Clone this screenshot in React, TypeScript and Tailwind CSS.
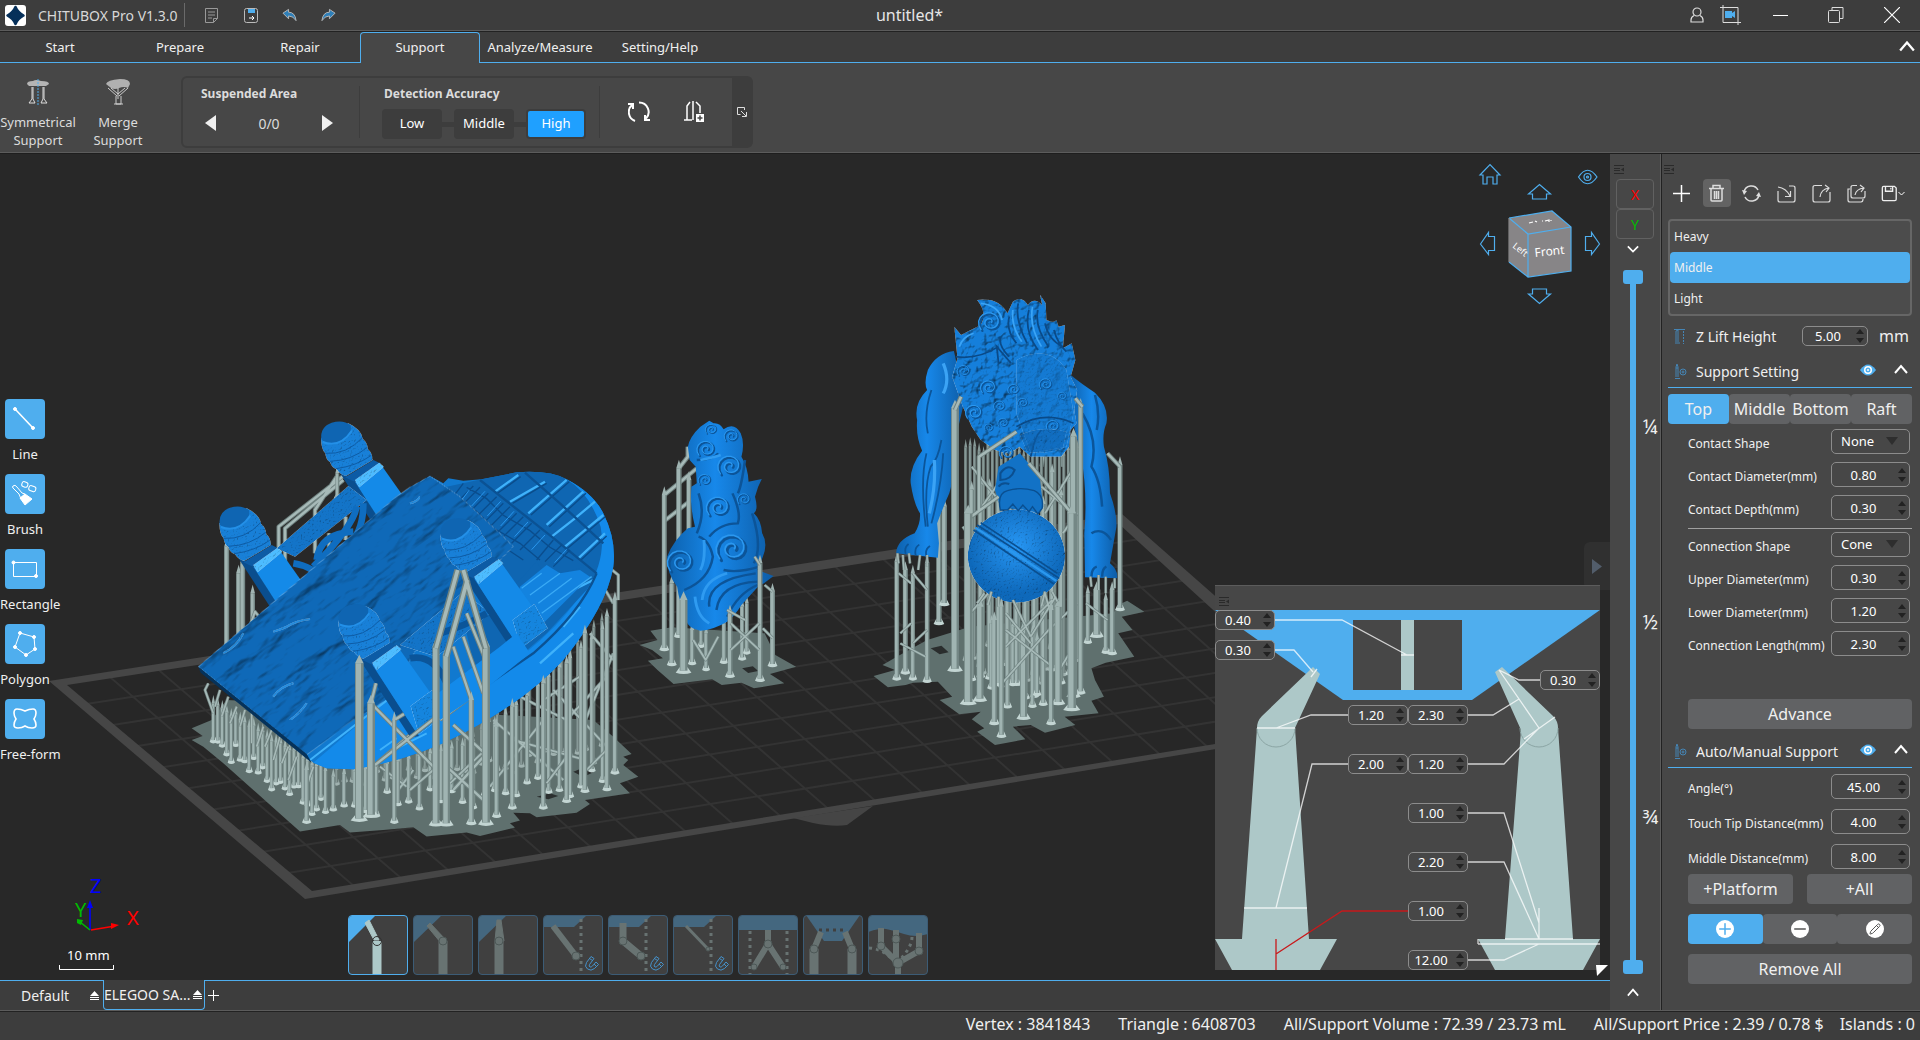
import type { ReactNode } from "react";
import { Minus, Pencil, Plus } from "lucide-react";

/* ---------- small shared pieces ---------- */

function Chevron({ down = false, size = 14 }: { down?: boolean; size?: number }) {
  return (
    <svg width={size} height={size} viewBox="0 0 14 14" fill="none" stroke="#fff" strokeWidth="2">
      <path d={down ? "M1 4l6 6 6-6" : "M1 10l6-7 6 7"} />
    </svg>
  );
}

function DockHandle() {
  return (
    <svg width="10" height="9" viewBox="0 0 10 9" stroke="#2a2a2a" aria-hidden="true">
      <path d="M0 .5h10M0 3.500h6M0 5.500h6M0 8.500h10" />
      <path d="M7 4.500l3-2v4z" fill="#2a2a2a" stroke="none" />
    </svg>
  );
}

function SpinArrows() {
  return (
    <svg className="pointer-events-none absolute right-1 top-1/2 -translate-y-1/2" width="8" height="14" viewBox="0 0 8 14" fill="#222">
      <path d="M4 0l4 5H0zM4 14l4-5H0z" />
    </svg>
  );
}

// className has to bring a position of its own (relative or absolute)
function NumberBox({ id, value, className, label }: { id?: string; value: string; className: string; label?: string }) {
  return (
    <div className={className}>
      <input
        id={id}
        aria-label={label}
        defaultValue={value}
        className="block h-full w-full rounded-[5px] border border-[#8c8c8c] bg-[#474747] pr-3.5 text-center text-[13px] text-white outline-none"
      />
      <SpinArrows />
    </div>
  );
}

function Row({ id, label, children }: { id: string; label: string; children: ReactNode }) {
  return (
    <div className="flex h-[25px] items-center justify-between pr-0.5">
      <label htmlFor={id} className="whitespace-nowrap pt-1 text-[12px]">{label}</label>
      {children}
    </div>
  );
}

function NumberRow({ id, label, value }: { id: string; label: string; value: string }) {
  return (
    <Row id={id} label={label}>
      <NumberBox id={id} value={value} className="relative h-[25px] w-[79px] shrink-0" />
    </Row>
  );
}

function SelectRow({ id, label, value }: { id: string; label: string; value: string }) {
  return (
    <Row id={id} label={label}>
      <div className="relative h-[25px] w-[79px] shrink-0">
        <select id={id} className="block h-full w-full appearance-none rounded-[5px] border border-[#8c8c8c] bg-[#474747] pl-[9px] text-[13px] text-white outline-none">
          <option>{value}</option>
        </select>
        <svg className="pointer-events-none absolute right-3 top-2" width="12" height="8" viewBox="0 0 12 8" fill="#2e2e2e">
          <path d="M0 0h12L6 8z" />
        </svg>
      </div>
    </Row>
  );
}

function EyeIcon() {
  return (
    <svg width="16" height="12" viewBox="0 0 16 12">
      <path d="M0 6Q8-5 16 6Q8 17 0 6z" fill="#4faeee" />
      <circle cx="8" cy="6" r="4" fill="#fff" />
      <circle cx="8" cy="6" r="2.500" fill="#4faeee" />
      <circle cx="8" cy="6" r="1" fill="#fff" />
    </svg>
  );
}

function SupportIcon() {
  return (
    <svg width="13" height="16" viewBox="0 0 13 16" fill="none" stroke="#4585b5">
      <path d="M1 14.500h5M2 13V3l1-3 1 3v10M2 4h2" />
      <circle cx="9" cy="8" r="3" />
      <circle cx="9" cy="8" r="1" />
    </svg>
  );
}

/* ---------- title bar, tabs and ribbon ---------- */

function TitleBar() {
  return (
    <header className="flex h-[31px] shrink-0 items-center border-b border-[#5c5c5c] bg-[#3d3d3d] pl-[5px] text-[#d8d8d8]">
      <div className="flex flex-1 items-center">
        <svg width="21" height="21" viewBox="0 0 21 21">
          <rect width="21" height="21" rx="3" fill="#fff" />
          <path d="M10.500 2q2 5 8 8.500-6 3.500-8 8.500-2-5-8-8.500 6-3.500 8-8.500z" fill="#06305a" stroke="#06305a" strokeWidth="2.500" strokeLinejoin="round" />
        </svg>
        <span className="w-[158px] pl-3 text-[14px]">CHITUBOX Pro V1.3.0</span>
        <span className="h-6 w-px bg-[#6a6a6a]" />
        <div className="flex items-center gap-6 pl-5">
          <button aria-label="Open">
            <svg width="13" height="15" viewBox="0 0 13 15" fill="none" stroke="#999"><path d="M.5.5h12v10l-4 4h-8zM3 4h7M3 7h7M3 10h4M12.500 10.500h-4v4" /></svg>
          </button>
          <button aria-label="Save" className="pl-0.5">
            <svg width="14" height="15" viewBox="0 0 14 15" fill="none" stroke="#bbb"><rect x=".5" y=".5" width="13" height="14" rx="2" /><path d="M4 1h7v4H4z" fill="#4faeee" stroke="none" /><path d="M5 10h5M8 8l2 2-2 2" stroke="#fff" /></svg>
          </button>
          <button aria-label="Undo">
            <svg width="15" height="14" viewBox="0 0 16 14" fill="#2f7fb8" stroke="#bbb"><path d="M1 5l6-4v3q7 0 8 9-3-5-8-5v3z" /></svg>
          </button>
          <button aria-label="Redo">
            <svg width="15" height="14" viewBox="0 0 16 14" fill="#2f7fb8" stroke="#bbb"><path d="M15 5L9 1v3Q2 4 1 13q3-5 8-5v3z" /></svg>
          </button>
        </div>
      </div>
      <h1 className="mr-[86px] text-[16px] leading-6 text-[#e6e6e6]">untitled*</h1>
      <div className="flex flex-1 items-center justify-end pr-5 text-white">
        <button aria-label="Account" className="mr-4">
          <svg width="14" height="16" viewBox="0 0 14 16" fill="none" stroke="#ddd" strokeWidth="1.200"><circle cx="7" cy="5" r="4" /><path d="M4 8.500Q1 10 1 13v2h12v-2q0-3-3-4.500" /></svg>
        </button>
        <button aria-label="Record" className="mr-8">
          <svg width="21" height="20" viewBox="0 0 21 20" fill="none" stroke="#ddd"><path d="M3 0v17.500h18M0 2.500h18V20" /><path d="M5 6h7v2l3-2v7l-3-2v2H5z" fill="#4faeee" stroke="none" /></svg>
        </button>
        <button aria-label="Minimize" className="mr-10">
          <svg width="15" height="15" viewBox="0 0 15 15" stroke="#fff"><path d="M0 7.500h15" /></svg>
        </button>
        <button aria-label="Restore" className="mr-10">
          <svg width="16" height="16" viewBox="0 0 16 16" fill="none" stroke="#ddd"><rect x=".5" y="3.500" width="11" height="12" rx="1" /><path d="M4 3.500v-3h11v11h-3" /></svg>
        </button>
        <button aria-label="Close">
          <svg width="16" height="16" viewBox="0 0 16 16" stroke="#fff" strokeWidth="1.200"><path d="M0 0l16 16M16 0L0 16" /></svg>
        </button>
      </div>
    </header>
  );
}

const tabs = ["Start", "Prepare", "Repair", "Support", "Analyze/Measure", "Setting/Help"];

function TabBar() {
  return (
    <nav className="flex h-8 shrink-0 border-t border-[#222] bg-[#3d3d3d] text-[13px]">
      {tabs.map((t) => (
        <button
          key={t}
          className={
            t === "Support"
              ? "w-[120px] shrink-0 rounded-t-[4px] border-x border-t border-[#4faeee] bg-[#474747]"
              : "w-[120px] shrink-0 whitespace-nowrap border-b border-[#4faeee] pt-px"
          }
        >
          {t}
        </button>
      ))}
      <div className="flex flex-1 items-center justify-end border-b border-[#4faeee] pr-[5px]">
        <button aria-label="Collapse ribbon"><Chevron size={16} /></button>
      </div>
    </nav>
  );
}

function Ribbon() {
  return (
    <section className="flex h-[91px] shrink-0 border-b border-[#1e1e1e] bg-[#474747] text-[#dcdcdc] shadow-[inset_0_-1px_0_#5c5c5c]">
      <button className="mt-4 flex w-[76px] flex-col items-center text-[13px] leading-[18px]">
        <svg width="22" height="26" viewBox="0 0 22 26" fill="none" stroke="#ddd">
          <path d="M0 5Q0 2 6 2q3-2 8 0 8 0 8 3l-3 2H2z" fill="#b5b5b5" stroke="none" />
          <path d="M5 8v12l-3 4h6l-2-4V8M17 8v12l3 4h-6l2-4V8" />
          <path d="M11 0v26" stroke="#4faeee" strokeDasharray="2 1" />
        </svg>
        <span className="mt-2">Symmetrical<br />Support</span>
      </button>
      <button className="mt-4 flex w-[84px] flex-col items-center text-[13px] leading-[18px]">
        <svg width="24" height="26" viewBox="0 0 24 26" fill="none" stroke="#ccc">
          <path d="M0 5Q1 1 14 0q10 0 10 5l-2 4q-4-2-9 0-4 2-8 0z" fill="#b0b0b0" stroke="none" />
          <path d="M2 9l9 8M5 9l7 6M12 9v11M22 9l-9 8M19 9l-7 6M10 17v8h5v-8M8 25h9" />
        </svg>
        <span className="mt-2">Merge<br />Support</span>
      </button>

      <div className="ml-[21px] mt-[13px] flex h-[72px] rounded-[6px] border-2 border-[#3d3d3d]">
        <div className="my-2 w-[177px] border-r border-[#3d3d3d] pl-[18px]">
          <h2 className="text-[12px] font-bold leading-4">Suspended Area</h2>
          <div className="mt-2 flex h-[26px] w-[132px] items-center justify-between pl-1 text-[14px]">
            <button aria-label="Previous"><svg width="11" height="16" viewBox="0 0 11 16" fill="#f0f0f0"><path d="M11 0v16L0 8z" /></svg></button>
            <span>0/0</span>
            <button aria-label="Next"><svg width="11" height="16" viewBox="0 0 11 16" fill="#f0f0f0"><path d="M0 0v16l11-8z" /></svg></button>
          </div>
        </div>
        <div className="my-2 w-[240px] border-r border-[#3d3d3d] pl-[22px]">
          <h2 className="pl-0.5 text-[12px] font-bold leading-4">Detection Accuracy</h2>
          <div className="mt-[7px] flex items-center text-[13px] text-white">
            <button className="h-[30px] w-[60px] rounded-[4px] bg-[#3d3d3d]">Low</button>
            <span className="h-[5px] w-3 bg-[#3d3d3d]" />
            <button className="h-[30px] w-[60px] rounded-[4px] bg-[#3d3d3d]">Middle</button>
            <span className="h-[5px] w-3 bg-[#3d3d3d]" />
            <button className="h-[30px] w-[60px] rounded-[4px] border-2 border-[#3d3d3d] bg-[#1fa0ff]">High</button>
          </div>
        </div>
        <div className="flex w-[132px] items-center gap-[34px] pl-7">
          <button aria-label="Redetect">
            <svg width="22" height="22" viewBox="0 0 22 22" fill="none" stroke="#fff" strokeWidth="2"><path d="M7 20A9.500 9.500 0 0 1 4 4M0 3h5v5M11 1.500a9.500 9.500 0 0 1 7 16M22 19h-5v-5" /></svg>
          </button>
          <button aria-label="Add supports">
            <svg width="21" height="22" viewBox="0 0 21 22" fill="none" stroke="#fff" strokeWidth="1.500"><path d="M6 1L3 5v14M0 19h8M9 0v19M12 1l4 4v7M9 0v19" /><rect x="12" y="13" width="8" height="8" fill="#fff" stroke="none" /><path d="M16 14.500v5M13.500 17h5" stroke="#474747" /></svg>
          </button>
        </div>
        <button aria-label="Expand" className="flex w-[19px] items-center justify-center bg-[#3d3d3d]">
          <svg width="10" height="10" viewBox="0 0 10 10" fill="none" stroke="#ddd"><path d="M7.500 3V.5h-7v7h3M4 4l5 5M9.500 5v4.500H5" /></svg>
        </button>
      </div>
    </section>
  );
}

/* ---------- 3D scene ---------- */

const corner = { l: [60, 683], b: [308, 895], t: [1120, 518], r: [1350, 724] };

function mix(a: number[], b: number[], k: number) {
  return [a[0] + (b[0] - a[0]) * k, a[1] + (b[1] - a[1]) * k];
}

function BuildPlate() {
  const lines: string[] = [];
  for (let i = 1; i < 22; i++) {
    const a = mix(corner.l, corner.t, i / 22);
    const b = mix(corner.b, corner.r, i / 22);
    lines.push(`M${a[0]} ${a[1]}L${b[0]} ${b[1]}`);
  }
  for (let i = 1; i < 10; i++) {
    const a = mix(corner.l, corner.b, i / 10);
    const b = mix(corner.t, corner.r, i / 10);
    lines.push(`M${a[0]} ${a[1]}L${b[0]} ${b[1]}`);
  }
  return (
    <g>
      <path d="M793 818l20 5q20 4 34 2l26-19z" fill="#454545" />
      <path d="M56 683L1120 519 1350 724 307 895z" fill="#272727" />
      <path d={lines.join("")} stroke="#333" strokeWidth="2" fill="none" />
      <path d="M49 681L1122 514 1362 725 305 899zM67 685L312 891 1338 724 1119 524z" fill="#464646" fillRule="evenodd" />
    </g>
  );
}

// x, top, bottom, thickness
type Pole = [number, number, number, number];

function Poles({ items, dark = false }: { items: Pole[]; dark?: boolean }) {
  const edge = dark ? "#5f6f6d" : "#748785";
  const face = dark ? "#879997" : "#a0b4b2";
  return (
    <g>
      {items.map(([x, y1, y2, w], i) => (
        <g key={i}>
          <path d={`M${x - w} ${y2}l${w * 0.5} -16h${w}l${w * 0.5} 16q${-w} 8 ${-w * 2} 0z`} fill={dark ? "#9fb1af" : "#c3d5d3"} />
          <path d={`M${x} ${y1}V${y2 - 6}`} stroke={edge} strokeWidth={w} />
          <path d={`M${x - w * 0.1} ${y1}V${y2 - 6}`} stroke={face} strokeWidth={w * 0.6} />
          <path d={`M${x - w / 2} ${y1}l${w / 2} -26 ${w / 2} 26z`} fill={face} />
        </g>
      ))}
    </g>
  );
}

function Struts({ d, w = 11 }: { d: string; w?: number }) {
  return (
    <g fill="none" strokeLinejoin="round">
      <path d={d} stroke="#6f8280" strokeWidth={w} />
      <path d={d} stroke="#a7bab8" strokeWidth={w * 0.55} />
    </g>
  );
}

// cheap repeatable scatter for the forest of thin supports
function scatter(n: number, at: (k: number, r: number) => Pole): Pole[] {
  const out: Pole[] = [];
  let s = 7;
  for (let i = 0; i < n; i++) {
    s = (s * 73 + 41) % 997;
    out.push(at(i / n, s / 997));
  }
  return out.sort((a, b) => a[2] - b[2]);
}

const underSlab = scatter(26, (k, r) => {
  const x = 100 + k * 350;
  return [x, 900 + k * 210 + r * 20, 1030 + k * 220 + (r - 0.6) * 80, 11];
});
const rimTop = (k: number) => (k < 0.5 ? 1110 - k * 200 : 1010 - (k - 0.5) * 740);
const underRimBack = scatter(34, (k, r) => [470 + k * 820, rimTop(k), 1150 - k * 90 + (r - 0.5) * 60, 10]);
const underRim = scatter(26, (k, r) => [460 + k * 840, rimTop(k) + 20, 1235 - k * 90 + (r - 0.6) * 90, 12]);
const frontPoles: Pole[] = [
  [1305, 600, 1120, 14], [1281, 650, 1170, 14], [1215, 700, 1175, 14], [1160, 790, 1205, 14], [1090, 850, 1225, 14],
  [997, 920, 1225, 14], [950, 980, 1250, 14], [874, 900, 1272, 16], [538, 790, 1262, 26], [573, 910, 1250, 24],
  [643, 960, 1268, 13], [380, 1110, 1268, 14], [768, 740, 1276, 22], [799, 765, 1276, 22], [918, 740, 1274, 24],
];

function Peg({ x, y }: { x: number; y: number }) {
  return (
    <g transform={`translate(${x} ${y})`}>
      <path d="M478 215L525 245 665 460 640 465 490 235z" fill="#0a4e8e" />
      <path d="M423 115Q424 150 436 160 438 180 450 186 456 204 470 208 480 224 498 228L578 180Q576 156 564 148 562 126 548 116 544 88 505 70z" fill="#1880d8" filter="url(#grain)" />
      <path d="M436 160Q500 165 548 112M450 184Q515 182 562 142M468 206Q530 198 574 166" fill="none" stroke="#0d5ba5" strokeWidth="3" />
      <path d="M424 118Q420 80 455 68 490 58 512 76 518 110 480 128 445 142 424 118z" fill="#0f65b2" />
      <path d="M428 126Q480 146 516 92" fill="none" stroke="#2390e8" strokeWidth="6" />
      <path d="M495 232L580 180 600 190 525 246z" fill="#0d5ba5" />
      <path d="M525 246L600 190 745 395 660 455z" fill="#148ae8" />
      <path d="M525 240L598 188 612 200 538 262z" fill="#4dbcff" filter="url(#grain)" />
      <path d="M640 370L705 322 745 395 665 455z" fill="#1585de" filter="url(#grain)" />
    </g>
  );
}

function Slab() {
  return (
    <g transform="translate(180 400) scale(.3333)">
      <path d="M35 985L95 960 140 900 1240 960 1300 1010 1355 1062 1330 1070 1345 1080 1330 1095 1375 1130 1320 1150 1350 1180 1215 1200 1230 1212 1190 1238 1070 1252 1050 1240 1000 1238 1020 1262 990 1270 1005 1283 900 1308 860 1298 740 1310 700 1282 610 1290 510 1298 480 1275 360 1295 310 1250 220 1170 130 1090 70 1040 35 1020 68 1008z" fill="#5f706e" />
      <path d="M1070 1190l40-10 25 8-30 10zM1180 1115l30-12 30 14-30 14z" fill="#2b2f2f" />
      <Struts d="M490 228L296 380V600M490 240L315 385V600M470 230L405 330V460M447 400V500M497 350V420" w={13} />
      <Poles items={[[140, 440, 760, 15], [176, 520, 740, 15], [188, 490, 740, 15], [218, 580, 720, 14], [472, 220, 300, 12]]} />
      <Struts d="M205 690l20-55 20 25" w={10} />
      <Peg x={0} y={0} />
      <Peg x={-305} y={255} />
      <path d="M505 258L560 300 345 470 290 445z" fill="#1374c8" filter="url(#grain)" />
      <path d="M550 310Q550 400 500 440M530 320Q520 380 400 500M410 480Q420 400 520 395M340 490Q400 500 430 540" fill="none" stroke="#0f6dc0" strokeWidth="20" />
      <Poles items={underSlab} />
      <Struts d="M85 850L75 870 100 940M120 870l-15 50M145 890l-20 60M170 920l-20 50M195 930l-15 50M215 940v90M250 980l-20 60M275 990l-20 50M300 1010l-20 70M325 1040l-20 50M350 1070l-25 70M400 1100l-20 60" w={9} />
      <Poles dark items={underRimBack} />
      <Struts
        d="M930 1160L1090 960M940 960L1150 1140M1020 890L1160 960M1000 1020L1215 1080M1120 870L1280 1040M1090 900L1215 820M1160 960L1280 830M1200 1000L1300 760M1230 700L1300 780M600 1100l80 60M700 1110l-60 80"
        w={10}
      />
      <Poles items={underRim} />
      <Struts d="M1220 1110L1280 1050M1100 1150L1160 1070M590 1090L770 950M810 1150L905 1060M690 1170L760 1110M1300 610L1270 560M1315 600V525L1290 505" w={10} />
      <path d="M55 800L650 290 690 262 750 228 790 250 805 235 850 242 905 238 1010 217Q1110 210 1160 238 1240 280 1270 340 1310 420 1300 500 1280 620 1150 780 1040 900 850 1000 700 1080 520 1108L440 1105 400 1088z" fill="#1179cf" />
      <path d="M1160 238Q1240 280 1270 340 1310 420 1300 500 1280 620 1150 780 1040 900 850 1000 700 1080 520 1108L440 1105 400 1088 620 900 700 960 860 880Q1060 760 1160 640 1260 520 1262 430 1250 320 1160 238z" fill="#138aea" />
      <path d="M905 238L1010 217Q1110 210 1160 238 1230 280 1262 380 1280 480 1220 570L1100 700 900 870 860 700 1000 500 800 260z" fill="#0f66b2" />
      <path d="M945 275L1015 225M990 305L1095 245M1045 340L1160 240M1100 375L1210 275M1115 410L1185 355 1245 305M1155 440L1270 345M1195 475L1275 400M1090 640L1160 575M1150 680L1200 620M1010 700L1080 655M970 800L1040 750M1080 790L1180 700M1240 540L1160 580" fill="none" stroke="#3fb2fb" strokeWidth="7" />
      <path d="M953 280L1022 230M998 310L1100 250M1053 345L1168 245M1108 380L1218 280M1163 445L1276 350M1203 480L1280 408" fill="none" stroke="#0a4c8a" strokeWidth="4" />
      <path d="M900 240L1115 410 1250 520M1035 218Q1060 240 1140 310L1270 430M1250 520Q1200 640 1060 760L820 925" fill="none" stroke="#0b5294" strokeWidth="7" />
      <path d="M760 250L840 290 1215 500 1100 530 1070 485 1000 560 880 500z" fill="#0f66b2" />
      <path d="M860 262l60 34 50 50 80 46 60 50 70 40M830 300l60 34 50 50 80 46 60 50M810 330l70 50 90 60 60 40M850 250l-30 40M880 258l-50 50M900 262l-50 50M925 280l-60 60M950 290l-60 60M970 310l-60 60M990 320l-60 60M1010 340l-60 60M1030 350l-60 60M1055 370l-60 60M1080 390l-60 60M1120 420l-50 60M1145 435l-50 50M1170 450l-50 50" fill="none" stroke="#0a4d8d" strokeWidth="4" />
      <path d="M868 270l-30 40M915 274l-40 44M962 304l-40 44M1002 334l-40 44M1044 366l-40 44M1095 405l-40 44M1160 448l-36 40" fill="none" stroke="#2a98ee" strokeWidth="3" />
      <path d="M1020 560l80-65 40 25 60-10 30 20-170 170-80 20z" fill="#1383df" />
      <path d="M1025 565l60-45M1050 585l90-65M1075 610l100-75M1085 640l150-110" stroke="#39aaf6" strokeWidth="4" />
      <g transform="rotate(-36)" filter="url(#rock)">
        <path transform="rotate(36)" d="M55 800L650 290 690 262 750 228 840 290 960 400 1000 440 900 540 760 660 620 900 520 960 380 1065z" fill="#0f69b8" />
      </g>
      <path d="M280 695q30-8 50-20t60-18M190 700q-20 40-60 60M330 960q30-20 50-50M280 890q20-30 60-40M690 310q20-4 30-20" fill="none" stroke="#2d9df2" strokeWidth="6" filter="url(#grain)" opacity=".7" />
      <path d="M400 1088L640 895 690 960 590 1050 480 1100z" fill="#138aea" />
      <path d="M390 1080L635 890M600 1050l50-35M620 1060l120-60" stroke="#3fb2fb" strokeWidth="6" fill="none" />
      <path d="M55 800L62 818 395 1088 380 1062z" fill="#06325a" />
      <path d="M660 735L850 575 930 640 770 770z" fill="#1374c8" filter="url(#grain)" />
      <path d="M690 775Q760 760 800 850M780 700Q850 680 920 640" fill="none" stroke="#0b559a" strokeWidth="20" />
      <Struts d="M590 1090L755 950M780 960L915 860" w={12} />
      <Peg x={358} y={290} />
      <Peg x={52} y={548} />
      <path d="M760 890L960 740 1010 700 1050 760 900 880 780 960z" fill="#138aea" />
      <Struts d="M860 640L925 800M820 740L874 900M850 710L910 880M575 912L770 1110M585 1095L770 950M820 975L915 1060M820 1170L920 1060M800 1100L910 1200M573 910L588 850M643 960L672 942" w={13} />
      <Poles items={frontPoles} />
      <Struts d="M768 745L833 510M799 770L862 540M918 745L850 510" w={20} />
    </g>
  );
}

function Curl({ x, y, r }: { x: number; y: number; r: number }) {
  const pts: string[] = [];
  for (let i = 0; i <= 26; i++) {
    const a = 2.4 + i * 0.4;
    const k = r * (1 - i / 30);
    pts.push(`${(x + Math.cos(a) * k).toFixed(1)} ${(y + Math.sin(a) * k).toFixed(1)}`);
  }
  const d = `M${pts.join("L")}`;
  return (
    <g fill="none" strokeLinecap="round" strokeLinejoin="round">
      <path d={d} stroke="#0c5498" strokeWidth={r * 0.14 + 1.5} />
      <path d={d} stroke="#2b98f0" strokeWidth={r * 0.08 + 1} transform={`translate(${-r * 0.12} ${-r * 0.12})`} />
    </g>
  );
}

const maneCurls = [
  [1040, 130, 34], [965, 275, 20], [1035, 325, 24], [995, 400, 26], [1105, 330, 18], [1065, 380, 18], [1130, 370, 16],
  [1195, 315, 20], [1240, 350, 14], [1075, 430, 16], [1035, 445, 14], [1085, 520, 22], [1215, 440, 20],
];

const tailPoles: Pole[] = [
  [165, 565, 1070, 15], [193, 600, 1000, 14], [124, 645, 1110, 14], [145, 910, 1155, 14], [202, 1050, 1152, 12], [227, 1040, 1100, 10],
  [291, 1030, 1148, 12], [342, 980, 1138, 12], [355, 970, 1120, 11], [241, 1060, 1170, 11], [178, 960, 1178, 22], [308, 1000, 1190, 14],
  [392, 850, 1202, 14], [427, 935, 1158, 14],
];

const lionBack = scatter(26, (k, r) => [968 + k * 325, 470 + r * 60, 1110 + r * 110 + (k < 0.3 || k > 0.7 ? -30 : 20), 9]);
const lionMid = scatter(12, (k, r) => [985 + k * 300, 540 + r * 160, 1180 + r * 90 + (k < 0.3 || k > 0.7 ? -30 : 20), 13]);

const lionPoles: Pole[] = [
  [893, 700, 1032, 15], [908, 680, 975, 15], [1400, 555, 990, 14], [775, 845, 1198, 13], [799, 870, 1180, 14], [820, 880, 1198, 12],
  [860, 850, 1205, 13], [1310, 940, 1088, 12], [1335, 930, 1070, 20], [1360, 960, 1118, 12], [1378, 930, 1122, 14], [938, 385, 1172, 22],
  [1290, 380, 1240, 14], [1270, 470, 1250, 20], [975, 700, 1272, 24], [1008, 980, 1262, 20], [1040, 1030, 1225, 12],
  [1130, 1050, 1316, 20], [1155, 1060, 1280, 12], [1227, 980, 1272, 20], [1168, 1080, 1245, 12], [1100, 1040, 1215, 11],
];

function Figures() {
  return (
    <g transform="translate(620 280) scale(.35714 .33333)">
      {/* tail piece */}
      <path d="M55 1095L105 1080 85 1052 145 1042 405 1060 435 1125 493 1160 420 1182 460 1210 375 1225 340 1208 285 1215 258 1198 150 1212 105 1170 78 1142 120 1135 90 1110z" fill="#5f706e" />
      <path d="M342 1165l30-6 15 14-28 6z" fill="#2a2d2d" />
      <Struts d="M190 500V530L165 565M215 565L124 645M205 655L122 725" w={13} />
      <Poles items={tailPoles.slice(0, 10)} />
      <path
        d="M190 500Q195 470 225 440L250 422 262 430Q280 428 290 448 320 425 338 460 350 490 340 530 358 560 360 605L397 597Q385 620 378 650 388 690 375 700 395 720 398 760 415 790 400 830L385 870 430 888 405 908 385 922 340 975Q320 1010 300 1025 260 1050 225 1052 190 1045 185 1020 165 960 160 920 130 880 132 830 150 780 190 745L210 740Q195 680 200 620L215 610 212 560 195 540z"
        fill="url(#body)"
      />
      <path d="M215 540Q260 540 275 520M220 640Q240 700 215 760M350 540Q340 620 330 640M315 640Q340 700 330 730 280 730 250 770M370 700Q400 800 375 850M180 930Q250 900 260 830 250 780 220 770M250 980Q240 900 380 880M270 990Q280 910 385 905M300 1010Q330 940 385 915M290 870Q330 880 390 860" fill="none" stroke="#0c5498" strokeWidth="7" />
      <path d="M225 540Q262 532 282 525M210 950Q215 1010 250 1030M230 960Q235 900 300 880M235 780Q240 840 225 870" fill="none" stroke="#2f9bf1" strokeWidth="8" />
      <Curl x={245} y={510} r={28} />
      <Curl x={258} y={450} r={18} />
      <Curl x={315} y={470} r={22} />
      <Curl x={312} y={562} r={36} />
      <Curl x={240} y={602} r={20} />
      <Curl x={280} y={685} r={36} />
      <Curl x={350} y={660} r={20} />
      <Curl x={320} y={810} r={48} />
      <Curl x={175} y={850} r={40} />
      <Poles items={tailPoles.slice(10)} />
      <Struts d="M310 1110L390 1030M310 1030L390 1110M205 1080l35 60 35-70M350 1020l-50-30M427 935l-22-20M392 855l-15-25M400 1045l28 30" w={9} />

      {/* lion */}
      <path d="M710 1188L770 1170 735 1155 775 1130 860 1080 980 1040 1380 1000 1405 970 1420 962 1468 995 1405 1010 1435 1050 1395 1060 1440 1130 1360 1148 1320 1165 1330 1200 1355 1250 1320 1262 1340 1300 1245 1310 1275 1335 1190 1358 1150 1335 1100 1340 1135 1378 1050 1395 1000 1355 1020 1345 985 1318 1010 1295 950 1303 895 1260 930 1250 890 1205 820 1208 800 1215 750 1222z" fill="#5f706e" />
      <path d="M870 1105l30-8 20 20-25 6z" fill="#2a2d2d" />
      <Poles items={lionPoles.slice(0, 3)} />
      <Struts d="M1400 560L1365 520M1180 560L1190 500M1240 500V560" w={12} />
      <path d="M1262 285Q1290 310 1330 338 1370 380 1362 430 1350 460 1355 500 1372 560 1372 640 1392 700 1390 740L1372 850Q1395 870 1392 895L1302 892 1300 760Q1310 640 1290 520L1262 400z" fill="url(#body)" />
      <path d="M1295 400Q1340 480 1320 560 1345 600 1350 680M1330 345Q1345 400 1335 450M1320 760Q1350 740 1375 780M1320 890q0-25 15-30M1350 890q0-25 12-30" fill="none" stroke="#0b559a" strokeWidth="7" />
      <Poles dark items={lionBack} />
      <Poles items={lionMid} />
      <Struts d="M985 560l90 120M1000 700l60-90M1000 800l-40-60M1180 620l90 80M1190 700l70-120M1240 760l40-60M980 1000l60-70M1200 1050l80-80M1230 1170l40-70" w={9} />
      <path d="M935 213Q885 220 862 270 850 310 860 330 822 370 832 420 828 470 846 512 810 560 814 610 822 670 840 700 842 730 825 760 775 780 773 820L890 833 893 790 888 730Q905 680 922 640 935 600 930 520L965 360z" fill="url(#body)" />
      <path d="M872 330Q850 400 862 460M900 480Q890 540 870 560 850 620 862 740M905 520Q900 620 872 730M858 520Q840 600 856 740M800 822q-5-20 8-30M828 826q-5-22 10-32M858 830q-5-22 10-32" fill="none" stroke="#0b559a" strokeWidth="5" />
      <path d="M905 250Q925 300 905 340M880 540Q885 620 866 700" fill="none" stroke="#3ba3f5" strokeWidth="9" />
      <path d="M1060 560L1120 520 1175 590 1185 680 1170 700 1065 680 1050 630z" fill="#1272c6" />
      <path d="M1065 580q20-30 40-10-10 30-40 30zM1060 620q10-15 30-8" fill="none" stroke="#0b4f90" strokeWidth="6" />
      <path
        d="M1000 60Q1060 50 1085 100L1100 65Q1125 45 1142 75 1160 50 1182 75L1176 44 1192 70 1194 120Q1215 130 1222 120L1228 140 1246 135 1240 205 1265 190 1275 240 1262 290 1280 330 1272 390 1278 430 1262 450 1258 500 1235 530 1150 530 1118 500Q1090 530 1050 510L1010 480 985 440 960 380 930 290 945 235 936 140 955 165 1010 135Q1030 100 1000 60z"
        fill="#157fdb"
        filter="url(#rough)"
      />
      <path d="M1110 240Q1200 190 1250 270L1270 400 1250 500 1150 520 1110 400z" fill="#1478cf" filter="url(#grain)" opacity=".6" />
      <path d="M940 230Q1000 240 1060 200M1090 110Q1080 150 1110 190M1145 90Q1130 150 1170 210M1115 70Q1105 120 1140 190M1170 90Q1160 140 1200 200M1190 130Q1200 180 1240 200M1215 150Q1225 190 1250 215M1060 250l-5-50 40 50M1065 170Q1060 200 1090 230M1150 530q10-60 30-80M1110 440q80-50 160-10" fill="none" stroke="#0a4a88" strokeWidth="5" />
      <path d="M950 200Q960 170 990 160M1100 90Q1095 140 1125 185M1155 80Q1145 140 1180 200M1010 70Q1060 75 1070 120" fill="none" stroke="#3aa4f6" strokeWidth="5" />
      {maneCurls.map(([x, y, r]) => (
        <Curl key={`${x}-${y}`} x={x} y={y} r={r} />
      ))}
      <path d="M1120 465q60-30 130-10l-10 50q-50 20-100 10z" fill="#0f64b2" filter="url(#grain)" opacity=".5" />
      <Poles items={lionPoles.slice(3, 14)} />
      <Struts d="M1110 455L1005 530V690M938 390L955 350M1295 380L1275 355M1060 650L970 720M1145 550L1265 700V760" w={13} />
      <Poles items={[[1265, 700, 1290, 24], ...lionPoles.slice(14)]} />
      <ellipse cx="1110" cy="828" rx="136" ry="140" fill="url(#ball)" filter="url(#grain)" />
      <path d="M1000 735L1230 895M990 750L1215 912M1010 728L1225 880" stroke="#0a4f90" strokeWidth="5" />
      <path d="M995 743L1222 903" stroke="#2a97ee" strokeWidth="7" />
      <path d="M1065 690Q1055 640 1085 632 1120 620 1160 632 1188 645 1182 685L1170 702 1155 680 1145 695 1128 675 1115 692 1100 672 1085 690z" fill="#1272c6" stroke="#0a4f90" strokeWidth="4" />
      <Struts d="M1000 970L1020 940M1030 975l10-40M1060 980v-30M1100 960l50 110M1150 1070l70-120M1080 1000l70 90M1180 980l10-45M1200 980l-10-40M1080 1100l130-140M1070 1210l130-160M1080 1050l130 110M1225 965l-15-30" w={9} />
      <Poles items={[[1048, 1020, 1332, 15], [1068, 980, 1370, 14], [1207, 990, 1332, 14]]} />
      <Struts d="M780 880l35 30M820 880l40 50M785 1060l30-30M820 1090l40-40M785 1090l70 40M780 850l-3-30M795 870l-3-45M812 850l-3-30M835 870l5-45M860 860v-35M1305 970l60 50M1320 920l-3-30M1340 930v-45M1360 940v-50M1385 925v-30" w={8} />
    </g>
  );
}

function Scene() {
  return (
    <svg className="block h-full w-full" viewBox="0 154 1610 826" preserveAspectRatio="xMidYMid slice" role="img" aria-label="Model view">
      <defs>
        <linearGradient id="body" x1="0" x2="1">
          <stop offset="0" stopColor="#0d61ad" />
          <stop offset=".45" stopColor="#1788ea" />
          <stop offset="1" stopColor="#0d5ca6" />
        </linearGradient>
        <radialGradient id="ball" cx=".5" cy=".4">
          <stop offset="0" stopColor="#2797f5" />
          <stop offset="1" stopColor="#0e69bb" />
        </radialGradient>
        <filter id="grain" x="0" y="0" width="1" height="1" colorInterpolationFilters="sRGB">
          <feTurbulence type="fractalNoise" baseFrequency=".3" numOctaves="2" result="n" />
          <feDiffuseLighting in="n" surfaceScale="4" diffuseConstant="1.250" lightingColor="#fff" result="l"><feDistantLight azimuth="225" elevation="58" /></feDiffuseLighting>
          <feBlend in="SourceGraphic" in2="l" mode="multiply" result="b" />
          <feComposite in="b" in2="SourceGraphic" operator="in" />
        </filter>
        <filter id="rough" x="0" y="0" width="1" height="1" colorInterpolationFilters="sRGB">
          <feTurbulence type="fractalNoise" baseFrequency=".04" numOctaves="3" result="n" />
          <feDiffuseLighting in="n" surfaceScale="8" diffuseConstant="1.200" lightingColor="#fff" result="l"><feDistantLight azimuth="225" elevation="58" /></feDiffuseLighting>
          <feBlend in="SourceGraphic" in2="l" mode="multiply" result="b" />
          <feComposite in="b" in2="SourceGraphic" operator="in" />
        </filter>
        <filter id="rock" x="0" y="0" width="1" height="1" colorInterpolationFilters="sRGB">
          <feTurbulence type="fractalNoise" baseFrequency=".006 .016" numOctaves="4" seed="4" result="n" />
          <feDiffuseLighting in="n" surfaceScale="12" diffuseConstant="1.150" lightingColor="#fff" result="l"><feDistantLight azimuth="250" elevation="62" /></feDiffuseLighting>
          <feBlend in="SourceGraphic" in2="l" mode="multiply" result="b" />
          <feComposite in="b" in2="SourceGraphic" operator="in" />
        </filter>
      </defs>
      <rect y="154" width="1610" height="826" fill="#282828" />
      <BuildPlate />
      <Slab />
      <Figures />
    </svg>
  );
}

/* ---------- overlays on the scene ---------- */

const drawTools: { name: string; icon: ReactNode }[] = [
  { name: "Line", icon: <><path d="M10 10l18 19" strokeWidth="1.600" /><circle cx="10" cy="10" r="1.500" fill="#fff" /><circle cx="28" cy="29" r="1.500" fill="#fff" /></> },
  { name: "Brush", icon: <><path d="M8 12q2-2 4 1l5 6 3 1-4 5-2-5-6-6q-1-1 0-2z" /><path d="M20 20l7 5-7 6-5-7z" fill="#fff" /><rect x="17" y="8" width="6" height="5" rx="2" transform="rotate(20 20 10)" /><rect x="24" y="12" width="7" height="5" rx="2" transform="rotate(20 27 14)" /></> },
  { name: "Rectangle", icon: <><path d="M8.500 13.500h23v14h-23z" /><circle cx="8.500" cy="13.500" r="1.500" fill="#fff" /><circle cx="31" cy="27" r="1.500" fill="#fff" /></> },
  { name: "Polygon", icon: <><path d="M15 9l14 4 1 12-9 6-11-8z" />{[[15, 9], [29, 13], [30, 25], [21, 31], [10, 23]].map(([x, y]) => <circle key={x} cx={x} cy={y} r="1.500" fill="#fff" />)}</> },
  { name: "Free-form", icon: <path d="M20 12q4-2 8-2 3 0 3 4 0 3-2 6 2 3 2 6 0 3-4 3-4 0-7-2-3 2-7 2-4 0-4-3 0-3 2-6-2-3-2-6 0-4 3-4 4 0 8 2z" strokeWidth="1.600" /> },
];

function DrawTools() {
  return (
    <div className="absolute left-0 top-[245px] flex flex-col gap-[5px]">
      {drawTools.map((t) => (
        <button key={t.name} className="flex h-[70px] w-max min-w-[50px] flex-col text-[13px]">
          <svg className="ml-[5px] rounded-[4px] bg-[#4faeee]" width="40" height="40" viewBox="0 0 40 40" fill="none" stroke="#fff">{t.icon}</svg>
          <span className="mt-[5px] w-full text-center leading-5">{t.name}</span>
        </button>
      ))}
    </div>
  );
}

function AxisGizmo() {
  return (
    <svg className="absolute bottom-[8px] left-[50px]" width="100" height="104" viewBox="50 868 100 104" fontSize="20">
      <g fill="none" strokeWidth="1.600">
        <path d="M90 930V905" stroke="#00f" /><path d="M90 930l-10-8" stroke="#0b0" /><path d="M91 930l24-4" stroke="#f00" />
      </g>
      <path d="M90 900l3 8h-6z" fill="#00f" />
      <path d="M77 919l6 1-2 5-4-2z" fill="#0b0" />
      <path d="M111 923l8 2-8 4z" fill="#f00" />
      <text x="90" y="893" fill="#00f">Z</text>
      <text x="75" y="917" fill="#0b0">Y</text>
      <text x="127" y="925" fill="#f00">X</text>
      <text x="67" y="960" fill="#fff" fontSize="13">10 mm</text>
      <path d="M59.500 965v4.500h54V965" fill="none" stroke="#fff" />
    </svg>
  );
}

function ViewCube() {
  return (
    <svg className="absolute right-[5px] top-0" width="135" height="160" viewBox="1470 154 135 160" fill="none" stroke="#4faeee" strokeWidth="1.200">
      <path d="M1480 175l10-10.500 10 10.500h-3v9h-4v-7h-6v7h-4v-9z" />
      <path d="M1578.500 177q9-13.500 18.500 0-9.500 13.500-18.500 0z" /><circle cx="1587.500" cy="177" r="3.500" /><circle cx="1587.500" cy="177" r="1" />
      <path d="M1528.500 194l11-9.500 11 9.500h-4v5h-14v-5z" />
      <path d="M1528.500 294h4v-5h14v5h4l-11 9.500z" />
      <path d="M1480.500 244l8-11.500v4h6v14h-6v4z" />
      <path d="M1599.500 244l-8-11.500v4h-6v14h6v4z" />
      <path d="M1509 218l43-7 19 16v44l-43 6-19-15z" fill="#878587" stroke="none" />
      <path d="M1509 218l19 16 43-7M1528 234v43M1509 218l43-7 19 16v44l-43 6-19-15" />
      <path d="M1509 218v44" stroke="#878587" />
      <path d="M1529 223l4-1M1535 221l2 1M1542 221h1M1545 221l4-1v2M1551 221v-1" stroke="#fff" />
      <g fill="#fff" stroke="none">
        <text x="1535" y="257" fontSize="12" transform="rotate(-6 1535 257)">Front</text>
        <text x="1512" y="247" fontSize="9" transform="rotate(38 1512 247)">Left</text>
      </g>
    </svg>
  );
}

function Thumb({ label, active = false, magnet = false, children }: { label: string; active?: boolean; magnet?: boolean; children: ReactNode }) {
  return (
    <button
      aria-label={label}
      className={`relative h-[60px] w-[60px] overflow-hidden rounded-[4px] border bg-[#404040] ${active ? "border-[#4faeee] text-[#adc8c8]" : "border-[#3c5c76] text-[#687372]"}`}
    >
      <svg width="58" height="58" viewBox="1 1 58 58" fill="none" stroke="currentColor">{children}</svg>
      {magnet && (
        <svg className="absolute bottom-[3px] right-[2px]" width="16" height="16" viewBox="0 0 16 16" fill="none" stroke="#4591c9">
          <path d="M7 1.500l3 2-4.500 6q-1 2 .5 2.500 1 .5 2.500-1l3.500-4 2.500 2.500-4 4q-3.500 3-7 .5t-1-6.500zM5.500 3.500l3 2M10 9l2.500 2.500" />
        </svg>
      )}
    </button>
  );
}

const Overhang = ({ d, active = false }: { d: string; active?: boolean }) => <path d={d} fill={active ? "#4faeee" : "#44677f"} stroke="none" />;
const Joint = ({ x, y, r = 4 }: { x: number; y: number; r?: number }) => <circle cx={x} cy={y} r={r} stroke="#4d5857" fill="currentColor" />;
const Dots = ({ d }: { d: string }) => <path d={d} strokeWidth="3" strokeDasharray="3 4" />;

function SupportKinds() {
  return (
    <div className="absolute bottom-[5px] left-[348px] flex gap-[5px]">
      <Thumb label="Heavy angled" active>
        <Overhang active d="M0 0h28L0 28z" />
        <path d="M17 8l4-3 10 20h-5z" fill="currentColor" /><path d="M29 26v34" strokeWidth="9" />
        <circle cx="29" cy="26" r="4.500" stroke="#333" />
      </Thumb>
      <Thumb label="Angled">
        <Overhang d="M0 0h29L0 28z" />
        <path d="M14 11l3-3 15 16-4 4z" fill="currentColor" /><path d="M30 26v34" strokeWidth="9" /><Joint x={30} y={26} />
      </Thumb>
      <Thumb label="Vertical">
        <Overhang d="M0 0h29L0 28z" />
        <path d="M19 5h4l3 21h-9z" fill="currentColor" /><path d="M21 26v34" strokeWidth="9" /><Joint x={21} y={26} />
      </Thumb>
      <Thumb label="Slanted to model" magnet>
        <Overhang d="M0 0h44L31 12H0z" />
        <Dots d="M38 4v52" /><path d="M10 11l23 30" strokeWidth="6" /><Joint x={33} y={41} />
      </Thumb>
      <Thumb label="Bent to model" magnet>
        <Overhang d="M0 0h44L31 12H0z" />
        <Dots d="M38 4v52" /><path d="M15 8v18l18 15" strokeWidth="7" /><Joint x={15} y={26} /><Joint x={33} y={41} />
      </Thumb>
      <Thumb label="Thin to model" magnet>
        <Overhang d="M0 0h44L31 12H0z" />
        <Dots d="M38 4v52" /><path d="M13 11l22 23" strokeWidth="3" /><Joint x={35} y={34} r={2} />
      </Thumb>
      <Thumb label="Fork">
        <Overhang d="M0 0h60v15H0z" />
        <Dots d="M12 16v44M49 16v44" /><path d="M30 15v14L16 52M30 29l15 23" strokeWidth="6" /><Joint x={30} y={29} /><Joint x={16} y={52} r={3} /><Joint x={45} y={52} r={3} />
      </Thumb>
      <Thumb label="Pair">
        <Overhang d="M3 0h54L39 26H21z" />
        <path d="M16 15h28" stroke="#404040" strokeWidth="3" strokeDasharray="3 4" />
        <path d="M18 17l-7 17M42 17l7 17" strokeWidth="6" /><path d="M11 34v26M49 34v26" strokeWidth="9" /><Joint x={11} y={34} /><Joint x={49} y={34} />
      </Thumb>
      <Thumb label="Tree">
        <Overhang d="M0 0h60v19q-12 4-24 0T18 14 0 17z" />
        <Dots d="M1 33q16 1 26 15M44 22q0 10-13 24" />
        <path d="M13 13v18l17 17M28 15v33M51 18v18L30 48v12" strokeWidth="6" /><Joint x={13} y={31} /><Joint x={28} y={24} /><Joint x={51} y={36} /><Joint x={30} y={48} r={5} />
      </Thumb>
    </div>
  );
}

function DetailPanel() {
  const box = "absolute h-5 w-[60px]";
  return (
    <div className="absolute bottom-[10px] right-[10px] flex h-[385px] w-[385px] flex-col border-t border-[#5c5c5c] bg-[#474747]">
      <div className="h-6 shrink-0 px-1 pt-[11px]"><DockHandle /></div>
      <div className="relative h-[360px]">
        <svg width="385" height="360" viewBox="0 0 385 360" fill="none">
          <path d="M0 0h385L257 90H128z" fill="#4faeee" />
          <path d="M138 10h109v70H138z" fill="#474747" />
          <g fill="#adc8c8">
            <path d="M186 10h13v70h-13z" />
            <path d="M98 57l7 7-25 54 14 211h28l-17 31H17L0 329h27l15-211q0-7 5-12l49-47z" />
            <path d="M287 57l-7 5 26 58-16 209h-27l17 31h88l17-31h-27l-15-211q0-7-5-12z" />
          </g>
          <path d="M42 118a19 19 0 0 0 38 0M305 118a19 19 0 0 0 38 0" stroke="#8ba5a4" />
          <g stroke="#fff" opacity=".75" strokeWidth="1.300">
            <path d="M60 10h67l65 35M60 40h19l19 22M96 67l6-8M186 45h13M133 105H96l-35 13M42 118h38M133 154H97L61 298M29 298h63" />
            <path d="M325 70h-21l-20-10 40 58M309 129l31-22M253 105h25l26-16M253 154h36l35-36M253 203h36l35 110M324 298v31M253 252h36l35 77M253 350h36l35-16M290 329h68M263 334h122M263 329v5" />
          </g>
          <path d="M193 301h-66l-66 43M61 329v31" stroke="#c8191b" strokeWidth="1.300" />
        </svg>
        <NumberBox label="Window diameter" value="0.40" className={`${box} left-0 top-0`} />
        <NumberBox label="Tip depth" value="0.30" className={`${box} left-0 top-[30px]`} />
        <NumberBox label="Upper diameter" value="0.30" className={`${box} right-0 top-[60px]`} />
        <NumberBox label="Lower diameter" value="1.20" className={`${box} left-[133px] top-[95px]`} />
        <NumberBox label="Connection length" value="2.30" className={`${box} left-[193px] top-[95px]`} />
        <NumberBox label="Bottom diameter" value="2.00" className={`${box} left-[133px] top-[144px]`} />
        <NumberBox label="Pillar diameter" value="1.20" className={`${box} left-[193px] top-[144px]`} />
        <NumberBox label="Base height" value="1.00" className={`${box} left-[193px] top-[193px]`} />
        <NumberBox label="Base diameter" value="2.20" className={`${box} left-[193px] top-[242px]`} />
        <NumberBox label="Raft thickness" value="1.00" className={`${box} left-[193px] top-[291px]`} />
        <NumberBox label="Raft diameter" value="12.00" className={`${box} left-[193px] top-[340px]`} />
      </div>
      <svg className="absolute -bottom-1.5 -right-2" width="12" height="12" viewBox="0 0 12 12" fill="#fff"><path d="M0 1l12 0L1 12z" /></svg>
    </div>
  );
}

function PlateTabs() {
  const eject = (
    <svg width="9" height="9" viewBox="0 0 9 9" fill="#fff"><path d="M4.500 0L9 5H0zM0 6h9v1H0zM0 8h9v1H0z" /></svg>
  );
  return (
    <div className="flex h-[30px] shrink-0 bg-[#3d3d3d] text-[14px]">
      <button className="flex w-[103px] items-center justify-between border-t border-[#4faeee] pl-[21px] pr-1">
        Default {eject}
      </button>
      <button className="flex w-[102px] items-center justify-between whitespace-nowrap rounded-b-[4px] border-x border-b border-[#4faeee] pr-0.5">
        ELEGOO SA... {eject}
      </button>
      <div className="flex flex-1 items-center border-t border-[#4faeee] pl-[3px]">
        <button aria-label="Add plate">
          <svg width="12" height="12" viewBox="0 0 12 12" stroke="#fff"><path d="M5.500 0v11M0 5.500h11" /></svg>
        </button>
      </div>
    </div>
  );
}

/* ---------- right side ---------- */

function LayerSlider() {
  const range =
    "pointer-events-none absolute inset-y-0 left-1/2 m-0 h-full w-5 -translate-x-1/2 appearance-none bg-transparent [direction:rtl] [writing-mode:vertical-lr] [&::-webkit-slider-thumb]:pointer-events-auto [&::-webkit-slider-thumb]:h-[14px] [&::-webkit-slider-thumb]:w-5 [&::-webkit-slider-thumb]:appearance-none [&::-webkit-slider-thumb]:rounded-[3px] [&::-webkit-slider-thumb]:bg-[#4faeee]";
  return (
    <aside className="flex w-[51px] shrink-0 flex-col items-center border-r border-[#5c5c5c] bg-[#474747] pb-[11px] pr-1">
      <div className="h-[25px] self-start pl-1 pt-[11px]"><DockHandle /></div>
      <div className="ml-1 flex flex-col text-[14px]">
        <button className="h-[30px] w-[38px] rounded-[4px] border border-[#616161] text-[#f00]">X</button>
        <button className="h-[30px] w-[38px] rounded-[4px] border border-[#616161] text-[#0b0]">Y</button>
      </div>
      <button aria-label="Step down" className="mt-1 mb-[15px]"><Chevron down size={12} /></button>
      <div className="relative w-full flex-1">
        <div className="absolute inset-y-2 left-1/2 w-1.5 -translate-x-1/2 bg-[#4faeee]" />
        <input type="range" aria-label="Top layer" min="0" max="100" defaultValue="100" className={range} />
        <input type="range" aria-label="Bottom layer" min="0" max="100" defaultValue="0" className={range} />
        <div className="absolute inset-y-0 -right-0.5 flex flex-col justify-around px-0 py-[60px] text-[20px] leading-6">
          <span>¼</span>
          <span>½</span>
          <span>¾</span>
        </div>
      </div>
      <button aria-label="Step up" className="mt-[13px]"><Chevron size={12} /></button>
    </aside>
  );
}

function ProfileToolbar() {
  const s = { width: 19, height: 19, viewBox: "0 0 19 19", fill: "none", stroke: "#ddd", strokeWidth: 1.5 };
  const cell = "flex h-7 w-[35px] items-center justify-center";
  return (
    <div className="-ml-1 flex h-7">
      <button aria-label="Add profile" className={cell}><svg {...s} stroke="#fff"><path d="M9.500 1v17M1 9.500h17" /></svg></button>
      <button aria-label="Delete profile" className={cell}>
        <span className="flex h-7 w-7 items-center justify-center rounded-[4px] bg-[#636363]">
          <svg {...s}><path d="M2 4.500h15M6 4V1.500h7V4M4 5v11q0 1 1 1h9q1 0 1-1V5M7.500 7v8M9.500 7v8M11.500 7v8" /></svg>
        </span>
      </button>
      <button aria-label="Reset profile" className={cell}><svg {...s}><path d="M2 8a7.500 7.500 0 0 1 14-2M17 11a7.500 7.500 0 0 1-14 2" /><path d="M0 6l5 1-3 4zM19 13l-5-1 3-4z" fill="#ddd" stroke="none" /></svg></button>
      <button aria-label="Import profile" className={cell}><svg {...s} strokeWidth={1.2}><path d="M1 7v9q0 2 2 2h13q2 0 2-2V4q0-2-2-2h-4M1 3q8 1 12 9M13.500 7v5.500H8" /></svg></button>
      <button aria-label="Export profile" className={cell}><svg {...s} strokeWidth={1.2}><path d="M10 1.500H3q-2 0-2 2V16q0 2 2 2h13q2 0 2-2V8M8 13q1-8 9-9M13 1l4 3-3 4" /></svg></button>
      <button aria-label="Export all" className={cell}><svg {...s} strokeWidth={1.2}><path d="M10 1.500H6q-2 0-2 2V12q0 2 2 2h10q2 0 2-2V7M3 5H1v11q0 2 2 2h11q2 0 2-3M8 11q1-6 9-7M13 1l4 3-3 4" /></svg></button>
      <button aria-label="Save profile" className="flex h-7 w-[38px] items-center justify-center">
        <svg {...s} width={17} height={17} stroke="#eee"><path d="M1.500 3q0-1.500 1.500-1.500h12l2 2V16q0 1.500-1.500 1.500H3q-1.500 0-1.500-1.500zM5 2v5h8V2M11 3v2" /></svg>
        <Chevron down size={7} />
      </button>
    </div>
  );
}

function SectionHead({ title }: { title: string }) {
  return (
    <div className="flex h-8 items-center border-b border-[#4faeee] pl-[6px]">
      <SupportIcon />
      <h2 className="flex-1 whitespace-nowrap pl-[9px] text-[14px]">{title}</h2>
      <button aria-label={`Show ${title}`} className="mb-1 mr-[18px]"><EyeIcon /></button>
      <button aria-label={`Collapse ${title}`} className="mb-1 mr-1"><Chevron /></button>
    </div>
  );
}

function SettingsPanel() {
  const btn = "h-[30px] rounded-[4px] bg-[#616264] text-[16px]";
  return (
    <aside className="w-[259px] shrink-0 border-l border-[#222] bg-[#474747] pl-[6px] pr-2">
      <div className="-ml-1 h-[25px] pt-[11px]"><DockHandle /></div>
      <ProfileToolbar />

      <ul className="mt-3 rounded-[4px] border-2 border-[#666] bg-[#4c4c4c] text-[12px]">
        {["Heavy", "Middle", "Light"].map((p) => (
          <li key={p}>
            <button className={`block h-[31px] w-full rounded-[4px] pl-1 text-left ${p === "Middle" ? "bg-[#4faeee]" : ""}`}>{p}</button>
          </li>
        ))}
      </ul>

      <div className="mt-[10px] flex h-5 items-center pl-[6px]">
        <svg width="12" height="15" viewBox="0 0 12 15" fill="none" stroke="#4585b5"><path d="M1 14h5M2 13V2l2-1v12M0 .5h11" /><path d="M9.500 2v13" strokeDasharray="2 1" /></svg>
        <label htmlFor="z-lift" className="flex-1 pl-[10px] text-[14px]">Z Lift Height</label>
        <NumberBox id="z-lift" value="5.00" className="relative h-5 w-[66px]" />
        <span className="w-11 pl-[11px] text-[16px]">mm</span>
      </div>

      <div className="mt-[10px]"><SectionHead title="Support Setting" /></div>
      <div className="mt-[6px] grid grid-cols-4">
        {["Top", "Middle", "Bottom", "Raft"].map((t) => (
          <button key={t} className={`h-[30px] rounded-[4px] text-[16px] ${t === "Top" ? "bg-[#4faeee]" : "bg-[#616264]"}`}>{t}</button>
        ))}
      </div>

      <div className="pl-5">
        <div className="mt-[5px] flex flex-col gap-2">
          <SelectRow id="contact-shape" label="Contact Shape" value="None" />
          <NumberRow id="contact-diameter" label="Contact Diameter(mm)" value="0.80" />
          <NumberRow id="contact-depth" label="Contact Depth(mm)" value="0.30" />
        </div>
        <hr className="mt-2 border-[#a0a0a0]" />
        <div className="mt-[3px] flex flex-col gap-2">
          <SelectRow id="connection-shape" label="Connection Shape" value="Cone" />
          <NumberRow id="upper-diameter" label="Upper Diameter(mm)" value="0.30" />
          <NumberRow id="lower-diameter" label="Lower Diameter(mm)" value="1.20" />
          <NumberRow id="connection-length" label="Connection Length(mm)" value="2.30" />
        </div>
        <button className={`${btn} mt-[43px] w-full`}>Advance</button>
      </div>

      <div className="mt-[7px]"><SectionHead title="Auto/Manual Support" /></div>
      <div className="pl-5">
        <div className="mt-[6px] flex flex-col gap-[10px]">
          <NumberRow id="angle" label="Angle(°)" value="45.00" />
          <NumberRow id="tip-distance" label="Touch Tip Distance(mm)" value="4.00" />
          <NumberRow id="middle-distance" label="Middle Distance(mm)" value="8.00" />
        </div>
        <div className="mt-[5px] grid grid-cols-2 gap-[14px]">
          <button className={btn}>+Platform</button>
          <button className={btn}>+All</button>
        </div>
        <div className="mt-[10px] grid grid-cols-3">
          <button aria-label="Add support" className="flex h-[30px] items-center justify-center rounded-[4px] bg-[#4faeee]">
            <span className="rounded-full bg-white text-[#4faeee]"><Plus size={18} strokeWidth={2} /></span>
          </button>
          <button aria-label="Delete support" className="flex h-[30px] items-center justify-center rounded-[4px] bg-[#616264]">
            <span className="rounded-full bg-white text-[#555]"><Minus size={18} strokeWidth={2} /></span>
          </button>
          <button aria-label="Edit support" className="flex h-[30px] items-center justify-center rounded-[4px] bg-[#616264]">
            <span className="rounded-full bg-white p-[3px] text-[#555]"><Pencil size={12} strokeWidth={2} /></span>
          </button>
        </div>
        <button className={`${btn} mt-[10px] w-full`}>Remove All</button>
      </div>
    </aside>
  );
}

function StatusBar() {
  return (
    <footer className="flex h-[30px] shrink-0 items-center justify-end gap-7 border-t border-[#5c5c5c] bg-[#3d3d3d] pb-1 pr-[5px] text-[16px] leading-6 shadow-[inset_0_1px_0_#222]">
      <span>Vertex : 3841843</span>
      <span>Triangle : 6408703</span>
      <span>All/Support Volume : 72.39 / 23.73 mL</span>
      <div className="flex gap-4">
        <span>All/Support Price : 2.39 / 0.78 $</span>
        <span>Islands : 0</span>
      </div>
    </footer>
  );
}

export default function App() {
  return (
    <div className="flex h-screen min-h-[1020px] flex-col overflow-hidden bg-[#282828] font-['Noto_Sans',sans-serif] text-[#f0f0f0]">
      <TitleBar />
      <TabBar />
      <Ribbon />
      <main className="flex min-h-0 flex-1">
        <div className="flex min-w-0 flex-1 flex-col">
          <div className="relative min-h-0 flex-1 overflow-hidden">
            <Scene />
            <DrawTools />
            <AxisGizmo />
            <ViewCube />
            <SupportKinds />
            <button aria-label="Hide panel" className="absolute right-0 top-[388px] flex h-12 w-[26px] items-center justify-center rounded-l-[6px] bg-[#303030]">
              <svg width="10" height="15" viewBox="0 0 10 15" fill="#525d6b"><path d="M0 0l10 7.500L0 15z" /></svg>
            </button>
            <DetailPanel />
          </div>
          <PlateTabs />
        </div>
        <LayerSlider />
        <SettingsPanel />
      </main>
      <StatusBar />
    </div>
  );
}
